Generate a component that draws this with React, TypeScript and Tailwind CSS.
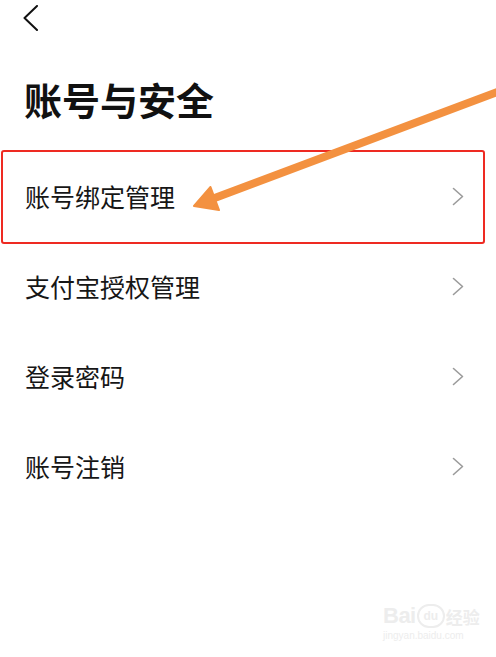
import React from "react";

const items = ["账号绑定管理", "支付宝授权管理", "登录密码", "账号注销"];

export default function App() {
  return (
    <div className="relative w-[496px] h-[657px] bg-white overflow-hidden font-['Noto_Sans_CJK_SC',sans-serif] text-[#161616]">
      <div className="h-[35px] pl-[23px] pt-[5px]">
        <svg width="16" height="26" viewBox="0 0 16 26" fill="none">
          <polyline points="14,1 1.5,13 14,25" stroke="#111" strokeWidth="2" strokeLinecap="round" strokeLinejoin="round" />
        </svg>
      </div>
      <div className="mt-[44px] pl-[24px] text-[38px] leading-[40px] font-bold text-[#111]">账号与安全</div>
      <div className="mt-[32px] flex flex-col">
        {items.map((t) => (
          <div key={t} className="h-[90px] flex items-center justify-between pl-[25px] pr-[32px]">
            <span className="text-[25px] leading-[30px]">{t}</span>
            <svg width="12" height="19" viewBox="0 0 12 19" fill="none">
              <polyline points="1.5,1.5 10.5,9.5 1.5,17.5" stroke="#9b9b9b" strokeWidth="1.6" strokeLinecap="round" strokeLinejoin="round" />
            </svg>
          </div>
        ))}
      </div>

      <div className="absolute left-[1px] top-[150px] w-[484px] h-[94px] border-2 border-[#ee2a22] rounded-[3px]" />

      <svg className="absolute left-0 top-0" width="496" height="657" viewBox="0 0 496 657">
        <line x1="500" y1="91" x2="212" y2="199" stroke="#f39140" strokeWidth="8" strokeLinecap="round" />
        <polygon points="194,206 219,210 210.5,187" fill="#f39140" stroke="#f39140" strokeWidth="2" strokeLinejoin="round" />
      </svg>

      <div className="absolute left-[383px] top-[604px] flex flex-col items-start text-[#ededed] font-['Liberation_Sans',sans-serif]">
        <div className="flex items-end gap-[1px]">
          <span className="text-[22px] leading-[24px] font-bold tracking-[-0.5px]">Bai</span>
          <span className="relative w-[28px] h-[24px] rounded-full border-2 border-[#ededed] flex items-center justify-center text-[12px] font-bold leading-none">du</span>
          <span className="text-[17px] leading-[22px] font-bold font-['Noto_Sans_CJK_SC',sans-serif]">经验</span>
        </div>
        <span className="text-[10px] leading-[12px] mt-[2px]">jingyan.baidu.com</span>
      </div>
    </div>
  );
}
